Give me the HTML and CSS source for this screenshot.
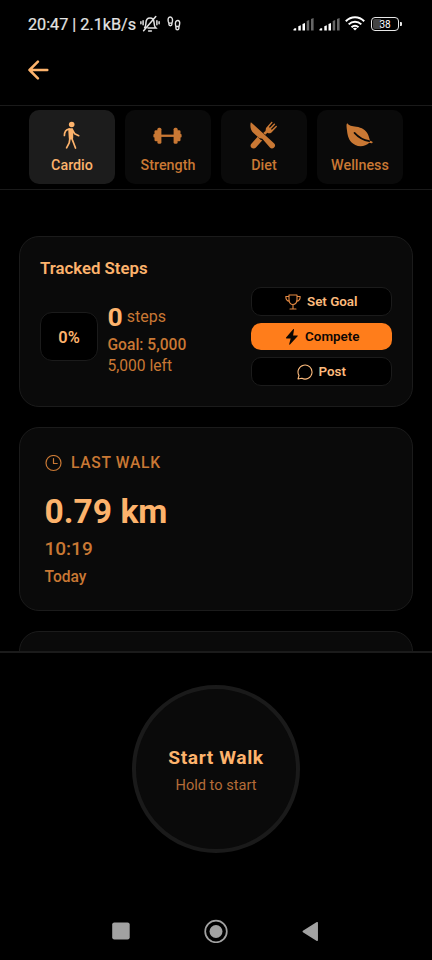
FILE: index.html
```html
<!DOCTYPE html>
<html lang="en">
<head>
<meta charset="utf-8">
<title>Cardio</title>
<meta name="viewport" content="width=device-width, initial-scale=1">
<link rel="stylesheet" href="styles.css">
</head>
<body>
<div class="app">
  <div class="status">
    <span class="clock">20:47 | 2.1kB/s</span>
    <svg class="bell" width="20" height="18" viewBox="0 0 20 18" fill="none" stroke="#e4e4e4" stroke-width="1.500" stroke-linecap="round">
      <path d="M4.600 12.600c1.200-1 1.200-2.300 1.300-4.600C6 5 7.600 3 10 3s4 2 4.100 5c.1 2.300.3 3.600 1.700 4.900H8M8.600 15.900h2.800M3.600 15.800 15.800 1.500M3.100 5.800v4M.9 6.800v2M16.900 5.800v4M19.100 6.800v2"/>
    </svg>
    <svg class="feet" width="14" height="16" viewBox="0 0 14 16" fill="none" stroke="#e4e4e4" stroke-width="1.400">
      <path d="M1.300 5.500C.6 2.800 1.500 1 3.200 1s2.700 1.900 2.200 4.500l-.5 1.600H1.900zM1.900 7.100v1.200c0 1.900 3 1.900 3 0V7.100M12.500 8.700c.7-2.700-.2-4.200-1.800-4.200S8 6.200 8.500 8.800l.4 1.700H12zM8.900 10.500v1.800c0 2 2.900 2 3 0v-1.800"/>
    </svg>
    <span class="spacer"></span>
    <svg class="signal" width="21" height="13" viewBox="0 0 21 13">
      <path fill="#fff" d="M.5 12.600v-1.400l1.200-1h1.500v2.400zM5.300 8.200l2.500-1v5.400H5.300zM9.500 6l2.500-1v7.600H9.500z"/><path fill="#666" d="M13.700 3l2.500-1v10.600h-2.500zM18 .9l2.600-.9v12.600H18z"/>
    </svg>
    <svg class="signal" width="21" height="13" viewBox="0 0 21 13">
      <path fill="#fff" d="M.5 12.600v-1.400l1.200-1h1.500v2.400zM5.300 8.200l2.500-1v5.400H5.300zM9.500 6l2.500-1v7.600H9.500z"/><path fill="#666" d="M13.700 3l2.500-1v10.600h-2.500zM18 .9l2.600-.9v12.600H18z"/>
    </svg>
    <svg class="wifi" width="20" height="15" viewBox="0 0 20 15" fill="none" stroke="#fff" stroke-width="2">
      <path d="M.8 5.200c5.300-5.300 13.100-5.300 18.400 0M3.700 8.400c3.700-3.700 8.900-3.700 12.600 0M6.500 11.300c2.200-2 4.800-2 7 0"/><path d="M10 14.500 7.900 12.600c1.400-1 2.800-1 4.200 0z" fill="#fff" stroke="none"/>
    </svg>
    <span class="battery"><span>38</span></span>
  </div>

  <header class="header">
    <svg width="22" height="20" viewBox="0 0 22 20" fill="none" stroke="#fdb36c" stroke-width="2.500" stroke-linecap="round" stroke-linejoin="round"><path d="M19.300 10H1.500M9.900 1.700 1.500 10l8.400 8.300"/></svg>
  </header>

  <nav class="tabs">
    <div class="tab active">
      <svg width="29" height="29" viewBox="0 0 29 29" fill="none" stroke="#fdb36c" stroke-width="1.700" stroke-linecap="round" stroke-linejoin="round"><circle cx="14.700" cy="3.500" r="2.800" fill="#fdb36c" stroke="none"/><path d="M12.200 8.200h3v8.800l-2.400.4z" fill="#fdb36c" stroke-width="2"/><path d="M12.200 8C8.500 8.700 7.400 10.500 7.400 14.500M15.700 9.500l2 3.200 4 2M12.900 17.500l-.7 4.300-2.600 5M14.900 17.600l1.800 4.700 1.800 4.700"/></svg>
      <span>Cardio</span>
    </div>
    <div class="tab">
      <svg width="29" height="29" viewBox="0 0 29 29" fill="#c97834"><path d="M8 13.600h13v2.300H8z"/><rect x="4.400" y="6.800" width="4" height="16" rx="1.500"/><rect x="1.500" y="9.300" width="4.500" height="11" rx="1.300"/><rect x=".4" y="13" width="2" height="3.500" rx=".8"/><rect x="20.600" y="6.800" width="4" height="16" rx="1.500"/><rect x="23" y="9.300" width="4.500" height="11" rx="1.300"/><rect x="26.600" y="13" width="2" height="3.500" rx=".8"/></svg>
      <span>Strength</span>
    </div>
    <div class="tab">
      <svg width="29" height="29" viewBox="0 0 29 29" fill="#c97834"><path d="M1.900 1.200C.8 4.200 1.300 9 4.500 12l5.600 5 3.200.8 7.600 8.700c1.300 1.400 3 1.200 4.200 0 1.400-1.300 1.300-3.100-.1-4.300z"/><path d="m16.500 9.900.5-3 5.300-6c.7-.6 1.600.1 1.100.8l-3.500 4.200 1 .9 4-4c.8-.6 1.600.2 1 .9l-4 4.200.9.9 4-3.800c.8-.6 1.500.4.900 1.100l-5.200 5.300c-1.600 1.300-3 1.100-4.100.4l-2.200 2-2-1.900zM8.600 15.800l3.200 3.200 1.600.2-6.500 7.300c-1.300 1.400-3.200 1.300-4.400.2-1.400-1.400-1.200-3 .1-4.200z"/></svg>
      <span>Diet</span>
    </div>
    <div class="tab">
      <svg width="29" height="29" viewBox="0 0 29 29"><path fill="#c97834" d="M2.300 2.200c1.500 2.400 4.500 2.900 9 3.500 5.500.7 9.700 3.400 11.600 7.600 1.100 2.600 1.500 4.700 2.200 6.500l2 .8c1 .4.500 2-.6 1.600l-2.200-.5c-3.500 3.500-9.300 4.600-14 2.300C4.500 21.200 2.700 16.300 2 9.500 1.700 6.300 1 3 2.300 2.200z"/><path fill="none" stroke="#0a0a0a" stroke-width="1.700" stroke-linecap="round" d="M9.500 11.900c4.500 5 9.300 7.400 14.700 8.200"/></svg>
      <span>Wellness</span>
    </div>
  </nav>

  <main class="content">
    <section class="card steps-card">
      <h2>Tracked Steps</h2>
      <div class="steps-row">
        <div class="percent">0%</div>
        <div class="counts">
          <div class="today"><b>0</b><span>steps</span></div>
          <div class="goal">Goal: 5,000</div>
          <div class="left">5,000 left</div>
        </div>
        <div class="actions">
          <button class="btn"><svg width="16" height="16" viewBox="0 0 16 16" fill="none" stroke="#e58a43" stroke-width="1.100" stroke-linejoin="round" stroke-linecap="round"><path d="M4 1h8v4.500c0 3-1.500 5-4 5s-4-2-4-5zM4 2.500H.8c0 3 1 4.500 3.800 5M12 2.500h3.200c0 3-1 4.500-3.800 5M8 10.500v4.500M5 15h6"/></svg><span>Set Goal</span></button>
          <button class="btn primary"><svg width="16" height="16" viewBox="0 0 16 16" fill="#0c0704"><path d="M9.200.3 2.100 8.500c-.3.500-.1.900.4.900h4.200l-1.500 5.700c-.1.600.4.800.8.400l7.600-8.200c.4-.5.2-.9-.4-.9H9.100L10 .7c.2-.6-.4-.8-.8-.4z"/></svg><span>Compete</span></button>
          <button class="btn"><svg width="16" height="16" viewBox="0 0 16 16" fill="none" stroke="#fdbb7d" stroke-width="1.100" stroke-linejoin="round"><path d="M2 11.600A7 7 0 1 1 4.900 14.300L1 15z"/></svg><span>Post</span></button>
        </div>
      </div>
    </section>

    <section class="card walk-card">
      <div class="eyebrow"><svg width="17" height="17" viewBox="0 0 17 17" fill="none" stroke="#c97834" stroke-width="1.200" stroke-linecap="round" stroke-linejoin="round"><circle cx="8.500" cy="8" r="7.500"/><path d="M8.500 3.500v5h3.700"/></svg><span>LAST WALK</span></div>
      <div class="distance">0.79 km</div>
      <div class="duration">10:19</div>
      <div class="day">Today</div>
    </section>

    <section class="card next-card"></section>
  </main>

  <footer class="footer">
    <button class="start"><span class="start-title">Start Walk</span><span class="start-hint">Hold to start</span></button>
  </footer>

  <div class="sysnav">
    <svg width="24" height="24" viewBox="0 0 24 24"><rect x="3.200" y="3.400" width="17.500" height="17" rx="2.200" fill="#a2a2a2"/></svg>
    <svg width="24" height="24" viewBox="0 0 24 24"><circle cx="12" cy="12.500" r="10.800" fill="none" stroke="#a2a2a2" stroke-width="1.700"/><circle cx="12" cy="12.500" r="6.500" fill="#a2a2a2"/></svg>
    <svg width="24" height="24" viewBox="0 0 24 24"><path d="M4.300 12.500 18.200 3.700V21.300z" fill="#a2a2a2" stroke="#a2a2a2" stroke-width="1.500" stroke-linejoin="round"/></svg>
  </div>
</div>
</body>
</html>
```
FILE: styles.css
```css
* { box-sizing: border-box; margin: 0; padding: 0; }
body { background: #000; font-family: Roboto, "Liberation Sans", sans-serif; color: #c97834; }
svg { display: block; flex: none; }
button { font: inherit; }
.app { width: 432px; height: 960px; display: flex; flex-direction: column; background: #000; overflow: hidden; white-space: nowrap; }

.status { height: 48px; flex: none; display: flex; align-items: center; padding: 0 33px 0 28px; }
.clock { color: #e4e4e4; font-size: 16.200px; -webkit-text-stroke: .2px #e4e4e4; }
.bell { margin-left: 4px; }
.feet { margin-left: 7px; margin-top: -1px; }
.spacer { flex: 1; }
.signal { margin-right: 5px; }
.wifi { margin-right: 6px; margin-top: -1px; }
.battery { width: 28px; height: 14px; border: 1.500px solid #e8e8e8; border-radius: 4px; color: #fff; font-size: 10px; line-height: 11px; text-align: center; position: relative; background: linear-gradient(90deg, #444 8px, transparent 8px) content-box; padding: 1px; }
.battery span { display: block; }
.battery::after { content: ""; position: absolute; right: -4px; top: 3.500px; width: 2px; height: 4px; border-radius: 0 1px 1px 0; background: #e8e8e8; }

.header { height: 57px; flex: none; padding: 12px 28px; }

.tabs { height: 85px; flex: none; display: grid; grid-template-columns: repeat(4, 86.400px); gap: 9.600px; padding: 4px 0 5px 28.800px; border-top: 1.500px solid #1a1a1a; border-bottom: 1.500px solid #1a1a1a; }
.tab { display: flex; flex-direction: column; align-items: center; padding-top: 11px; gap: 7px; border-radius: 10px; background: #0a0a0a; font-size: 14.300px; line-height: 17px; font-weight: 500; }
.tab.active { background: #1c1c1c; color: #fdb36c; }

.content { height: 461px; flex: none; padding: 46px 19px 0; display: flex; flex-direction: column; gap: 20px; overflow: hidden; }
.card { flex: none; border: 1px solid #1b1b1b; border-radius: 20px; background: #0a0a0a; }

.steps-card { height: 171px; padding: 21px 20px 0; }
.steps-card h2 { font-size: 16.800px; line-height: 20px; font-weight: 600; color: #fdb36c; }
.steps-row { display: flex; align-items: center; margin-top: 9px; }
.percent { width: 58px; height: 49px; padding-top: 2px; display: flex; align-items: center; justify-content: center; border: 1px solid #1b1b1b; border-radius: 12px; background: #000; color: #fdb36c; font-size: 16.400px; font-weight: 600; }
.counts { margin-left: 9.500px; padding-top: 4px; flex: 1; font-size: 15.600px; }
.today { display: flex; align-items: center; gap: 4px; height: 32px; line-height: 32px; }
.today b { font-size: 26.500px; color: #fdb36c; }
.today span { font-size: 16px; }
.goal { line-height: 22px; font-weight: 500; margin-top: 1px; }
.left { line-height: 21px; }
.actions { width: 141px; display: flex; flex-direction: column; gap: 7px; }
.btn { height: 29px; display: flex; align-items: center; justify-content: center; gap: 5.500px; border: 1px solid #1b1b1b; border-radius: 10px; background: #000; color: #fdbb7d; font-size: 13.400px; font-weight: 600; }
.btn.primary { height: 27px; border: 0; background: #ff7d1b; color: #0c0704; }

.walk-card { height: 184px; padding: 26px 25px 0 24.500px; }
.eyebrow { display: flex; align-items: center; gap: 9.500px; height: 18px; font-size: 15.600px; font-weight: 500; letter-spacing: .7px; }
.distance { margin-top: 18px; font-size: 33.600px; line-height: 44px; font-weight: 700; color: #fdb36c; }
.duration { font-size: 19px; line-height: 29px; font-weight: 500; }
.day { font-size: 15.600px; line-height: 28px; font-weight: 500; }
.next-card { height: 184px; }

.footer { flex: 1; border-top: 2px solid #1b1b1b; padding-top: 32px; display: flex; justify-content: center; align-items: flex-start; }
.start { width: 168px; height: 168px; padding-top: 2px; border: 4px solid #1a1a1a; border-radius: 50%; background: #0a0a0a; display: flex; flex-direction: column; align-items: center; justify-content: center; gap: 5px; }
.start-title { color: #fdb36c; font-size: 19.200px; line-height: 24px; font-weight: 700; letter-spacing: .6px; }
.start-hint { color: #b46c38; font-size: 14.600px; line-height: 20px; }

.sysnav { height: 57px; flex: none; display: flex; justify-content: space-between; align-items: flex-start; padding: 16px 109px 0; }
```
